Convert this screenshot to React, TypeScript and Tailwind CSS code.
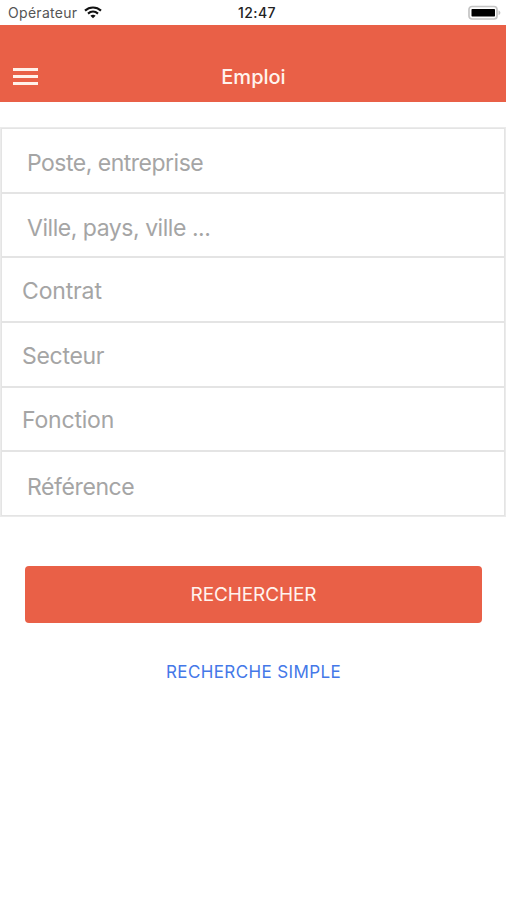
type Field = {
  id: string;
  label: string;
  className: string;
};

const fields: Field[] = [
  { id: 'keywords', label: 'Poste, entreprise', className: 'pl-[25px] pt-[7px] tracking-[-0.5px]' },
  { id: 'location', label: 'Ville, pays, ville ...', className: 'pl-[25px] pt-[7px] tracking-[-0.46px]' },
  { id: 'contract', label: 'Contrat', className: 'pl-[20px] pt-[4px] tracking-[-0.15px]' },
  { id: 'sector', label: 'Secteur', className: 'pl-[20px] pt-[4px] tracking-[-0.3px]' },
  { id: 'function', label: 'Fonction', className: 'pl-[20px] pt-[4px] tracking-[-0.2px]' },
  { id: 'reference', label: 'Référence', className: 'pl-[25px] pt-[7px] tracking-[-0.4px]' },
];

function WifiIcon() {
  return (
    <svg width="18" height="13" viewBox="0 0 18 13" fill="none" stroke="#111" strokeWidth="2.1">
      <path d="M1 4.6C5.5 0.5 12.5 0.5 17 4.6" />
      <path d="M4 7.6C7 5 11 5 14 7.6" />
      <path d="M9 12.3L6.4 9.8C7.9 8.5 10.1 8.5 11.6 9.8Z" fill="#111" stroke="none" />
    </svg>
  );
}

function BatteryIcon() {
  return (
    <svg width="34" height="16" viewBox="0 0 34 16">
      <rect x="1" y="1.5" width="28" height="12.5" rx="3" fill="#fff" stroke="#c4c4c4" strokeWidth="1.7" />
      <rect x="3.5" y="4" width="23.5" height="7.5" rx="0.7" fill="#000" />
      <path d="M30.5 5.5C33 6.2 33 9.3 30.5 10Z" fill="#c4c4c4" />
    </svg>
  );
}

function StatusBar() {
  return (
    <div className="grid h-[25px] grid-cols-3 items-center text-[14px] text-[#222]">
      <div className="flex items-center gap-[7px] pl-[8px]">
        <span className="tracking-[0.3px] text-[#555]">Opérateur</span>
        <WifiIcon />
      </div>
      <span className="pl-[8px] text-center font-medium tracking-[0.4px]">12:47</span>
      <div className="flex justify-end pr-[4px]">
        <BatteryIcon />
      </div>
    </div>
  );
}

function Header() {
  return (
    <header className="grid h-[77px] grid-cols-3 items-center bg-[#e96047] pt-[26px] text-white">
      <button type="button" aria-label="Menu" className="ml-[13px] flex w-[25px] flex-col gap-[4px]">
        <span className="h-[3px] bg-[#fff1ea]" />
        <span className="h-[3px] bg-[#fff1ea]" />
        <span className="h-[3px] bg-[#fff1ea]" />
      </button>
      <h1 className="pl-px text-center text-[20px] font-medium text-[#fff3ee]">Emploi</h1>
    </header>
  );
}

function App() {
  return (
    <div className="min-h-screen bg-white font-['Inter','Liberation_Sans',sans-serif]">
      <StatusBar />
      <Header />
      <main className="pt-[25px]">
        <div className="grid h-[390px] grid-rows-6 border border-[#ebebeb]">
          {fields.map(({ id, label, className }) => (
            <div
              key={id}
              className={`flex items-center border border-[#e4e4e4] text-[23px] leading-none text-[#a5a5a5] ${className}`}
            >
              <span>{label}</span>
            </div>
          ))}
        </div>
        <div className="flex flex-col items-center pt-[49px] pr-[24px] pl-[25px]">
          <button
            type="button"
            className="h-[57px] w-full rounded-[4px] bg-[#e96047] pt-[2px] text-[19px] tracking-[-0.1px] text-[#fff3ee]"
          >
            RECHERCHER
          </button>
          <button type="button" className="mt-[37px] text-[17px] leading-[24px] tracking-[0.38px] text-[#4478e8]">
            RECHERCHE SIMPLE
          </button>
        </div>
      </main>
    </div>
  );
}

export default App;
